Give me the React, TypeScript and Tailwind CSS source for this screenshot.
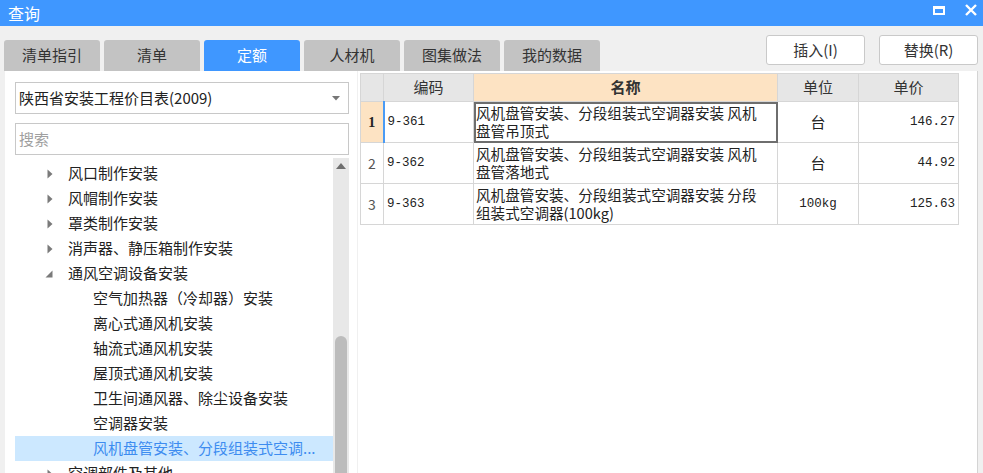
import * as React from "react";

const FONT = { fontFamily: '"Microsoft YaHei", "Noto Sans CJK SC", "Noto Sans", sans-serif' };
const MONO = { fontFamily: '"Liberation Mono", "Noto Sans CJK SC", monospace' };

const tabs = ["清单指引", "清单", "定额", "人材机", "图集做法", "我的数据"];

interface TreeNode {
  label: string;
  level: 0 | 1;
  arrow?: "closed" | "open";
  selected?: boolean;
}

const tree: TreeNode[] = [
  { label: "风口制作安装", level: 0, arrow: "closed" },
  { label: "风帽制作安装", level: 0, arrow: "closed" },
  { label: "罩类制作安装", level: 0, arrow: "closed" },
  { label: "消声器、静压箱制作安装", level: 0, arrow: "closed" },
  { label: "通风空调设备安装", level: 0, arrow: "open" },
  { label: "空气加热器（冷却器）安装", level: 1 },
  { label: "离心式通风机安装", level: 1 },
  { label: "轴流式通风机安装", level: 1 },
  { label: "屋顶式通风机安装", level: 1 },
  { label: "卫生间通风器、除尘设备安装", level: 1 },
  { label: "空调器安装", level: 1 },
  { label: "风机盘管安装、分段组装式空调...", level: 1, selected: true },
  { label: "空调部件及其他", level: 0, arrow: "closed" },
];

const rows = [
  { no: "1", code: "9-361", name: ["风机盘管安装、分段组装式空调器安装 风机", "盘管吊顶式"], unit: "台", price: "146.27" },
  { no: "2", code: "9-362", name: ["风机盘管安装、分段组装式空调器安装 风机", "盘管落地式"], unit: "台", price: "44.92" },
  { no: "3", code: "9-363", name: ["风机盘管安装、分段组装式空调器安装 分段", "组装式空调器(100kg)"], unit: "100kg", price: "125.63" },
];

function Arrow({ kind }: { kind?: "closed" | "open" }) {
  if (!kind) return null;
  if (kind === "closed")
    return (
      <svg width="6" height="10" viewBox="0 0 6 10" className="shrink-0">
        <path d="M0.5 0.5 L5.5 5 L0.5 9.5 Z" fill="#7a7a7a" />
      </svg>
    );
  return (
    <svg width="8" height="8" viewBox="0 0 8 8" className="shrink-0">
      <path d="M7.5 0.5 L7.5 7.5 L0.5 7.5 Z" fill="#7a7a7a" />
    </svg>
  );
}

export default function App() {
  return (
    <div className="w-[983px] h-[473px] overflow-hidden bg-[#f0f0f0] flex flex-col text-[15px] text-[#222]" style={FONT}>
      {/* title bar */}
      <div className="h-[26px] shrink-0 bg-[#3f97ff] flex items-center justify-between pl-[8px] pr-[4px] text-white">
        <span className="text-[16px] leading-none">查询</span>
        <div className="flex items-center gap-[20px] pr-[2px]">
          <div className="w-[12px] h-[9px] border-2 border-white border-t-[3px] mb-[6px]" />
          <svg width="12" height="12" viewBox="0 0 12 12" className="mb-[6px]">
            <path d="M1 1 L11 11 M11 1 L1 11" stroke="white" strokeWidth="2.4" />
          </svg>
        </div>
      </div>

      {/* tabs + buttons */}
      <div className="h-[45px] shrink-0 flex pl-[4px] pr-[5px]">
        <div className="flex items-end gap-[4px]">
          {tabs.map((t) => (
            <div
              key={t}
              className={
                "w-[96px] h-[31px] rounded-t-[3px] flex items-center justify-center " +
                (t === "定额" ? "bg-[#3f97ff] text-white" : "bg-[#c3c3c3] text-[#333]")
              }
            >
              {t}
            </div>
          ))}
        </div>
        <div className="ml-auto flex gap-[14px] pt-[9px]">
          <button className="w-[99px] h-[30px] bg-white border border-[#c9c9c9] rounded-[3px] text-[#333]">插入(I)</button>
          <button className="w-[99px] h-[30px] bg-white border border-[#c9c9c9] rounded-[3px] text-[#333]">替换(R)</button>
        </div>
      </div>

      {/* main */}
      <div className="flex flex-1 min-h-0 pl-[5px] pr-[5px]">
        {/* left panel */}
        <div className="w-[352px] bg-white flex flex-col pl-[10px] pr-[8px]">
          <div className="mt-[11px] h-[32px] border border-[#c8c8c8] flex items-center pl-[3px] pr-[8px]">
            <span className="flex-1">陕西省安装工程价目表(2009)</span>
            <svg width="8" height="5" viewBox="0 0 8 5">
              <path d="M0 0 L8 0 L4 4.5 Z" fill="#777" />
            </svg>
          </div>
          <div className="mt-[9px] h-[32px] border border-[#c8c8c8] flex items-center pl-[3px] text-[#a0a0a0]">搜索</div>
          <div className="mt-[3px] flex flex-1 min-h-0">
            <div className="flex-1 pt-[3px]">
              {tree.map((n) => (
                <div
                  key={n.label}
                  className={
                    "h-[25px] flex items-center whitespace-nowrap " +
                    (n.selected ? "bg-[#cce8ff] text-[#3d8cf0]" : "")
                  }
                >
                  {n.level === 0 ? (
                    <>
                      <div className="w-[53px] flex justify-end pr-[15px]">
                        <Arrow kind={n.arrow} />
                      </div>
                      <span>{n.label}</span>
                    </>
                  ) : (
                    <span className="pl-[78px]">{n.label}</span>
                  )}
                </div>
              ))}
            </div>
            <div className="w-[16px] bg-[#e8e8e8] flex flex-col items-center">
              <svg width="10" height="6" viewBox="0 0 10 6" className="mt-[5px]">
                <path d="M0 6 L5 0 L10 6 Z" fill="#6f6f6f" />
              </svg>
              <div className="mt-[167px] w-[12px] flex-1 bg-[#bcbcbc] rounded-t-full" />
            </div>
          </div>
        </div>

        {/* right panel */}
        <div className="flex-1 ml-[1px] bg-white border-r border-[#d4d4d4] pl-[2px] pt-[2px]">
          <table className="border-collapse table-fixed w-[598px] text-[15px]">
            <colgroup>
              <col className="w-[23px]" />
              <col className="w-[90px]" />
              <col className="w-[304px]" />
              <col className="w-[81px]" />
              <col className="w-[100px]" />
            </colgroup>
            <thead>
              <tr className="h-[28px] text-[#333]">
                <th className="bg-[#e6e6e6] border border-[#d6d6d6] font-normal" />
                <th className="bg-[#e6e6e6] border border-[#d6d6d6] font-normal">编码</th>
                <th className="bg-[#fde3c3] border border-[#d6d6d6] font-bold">名称</th>
                <th className="bg-[#e6e6e6] border border-[#d6d6d6] font-normal">单位</th>
                <th className="bg-[#e6e6e6] border border-[#d6d6d6] font-normal">单价</th>
              </tr>
            </thead>
            <tbody>
              {rows.map((r, i) => (
                <tr key={r.no} className="h-[41px]">
                  <td
                    className={
                      "border border-[#d6d6d6] text-center text-[14px] " +
                      (i === 0 ? "bg-[#fde3c3] font-bold text-[#222]" : "text-[#555]")
                    }
                    style={i === 0 ? { fontFamily: '"Liberation Serif", serif' } : undefined}
                  >
                    {r.no}
                  </td>
                  <td
                    className={
                      "border border-[#d6d6d6] pl-[3px] text-[12.5px] " +
                      (i === 0 ? "border-l-2 border-l-[#4a9bf5] border-t-[#9cc4f5]" : "")
                    }
                    style={MONO}
                  >
                    {r.code}
                  </td>
                  <td
                    className={
                      "border border-[#d6d6d6] align-top pl-[2px] pt-[2px] text-[14.6px] leading-[18px] whitespace-nowrap " +
                      (i === 0 ? "outline-2 -outline-offset-2 outline-[#6e6e6e] border-t-[#9cc4f5]" : "")
                    }
                  >
                    <div className="h-[18px]">{r.name[0]}</div>
                    <div className="h-[18px]">{r.name[1]}</div>
                  </td>
                  <td className="border border-[#d6d6d6] text-center" style={r.unit === "100kg" ? MONO : undefined}>
                    <span className={r.unit === "100kg" ? "text-[12.5px]" : ""}>{r.unit}</span>
                  </td>
                  <td className="border border-[#d6d6d6] text-right pr-[3px] text-[12.5px]" style={MONO}>
                    {r.price}
                  </td>
                </tr>
              ))}
            </tbody>
          </table>
        </div>
      </div>
    </div>
  );
}
